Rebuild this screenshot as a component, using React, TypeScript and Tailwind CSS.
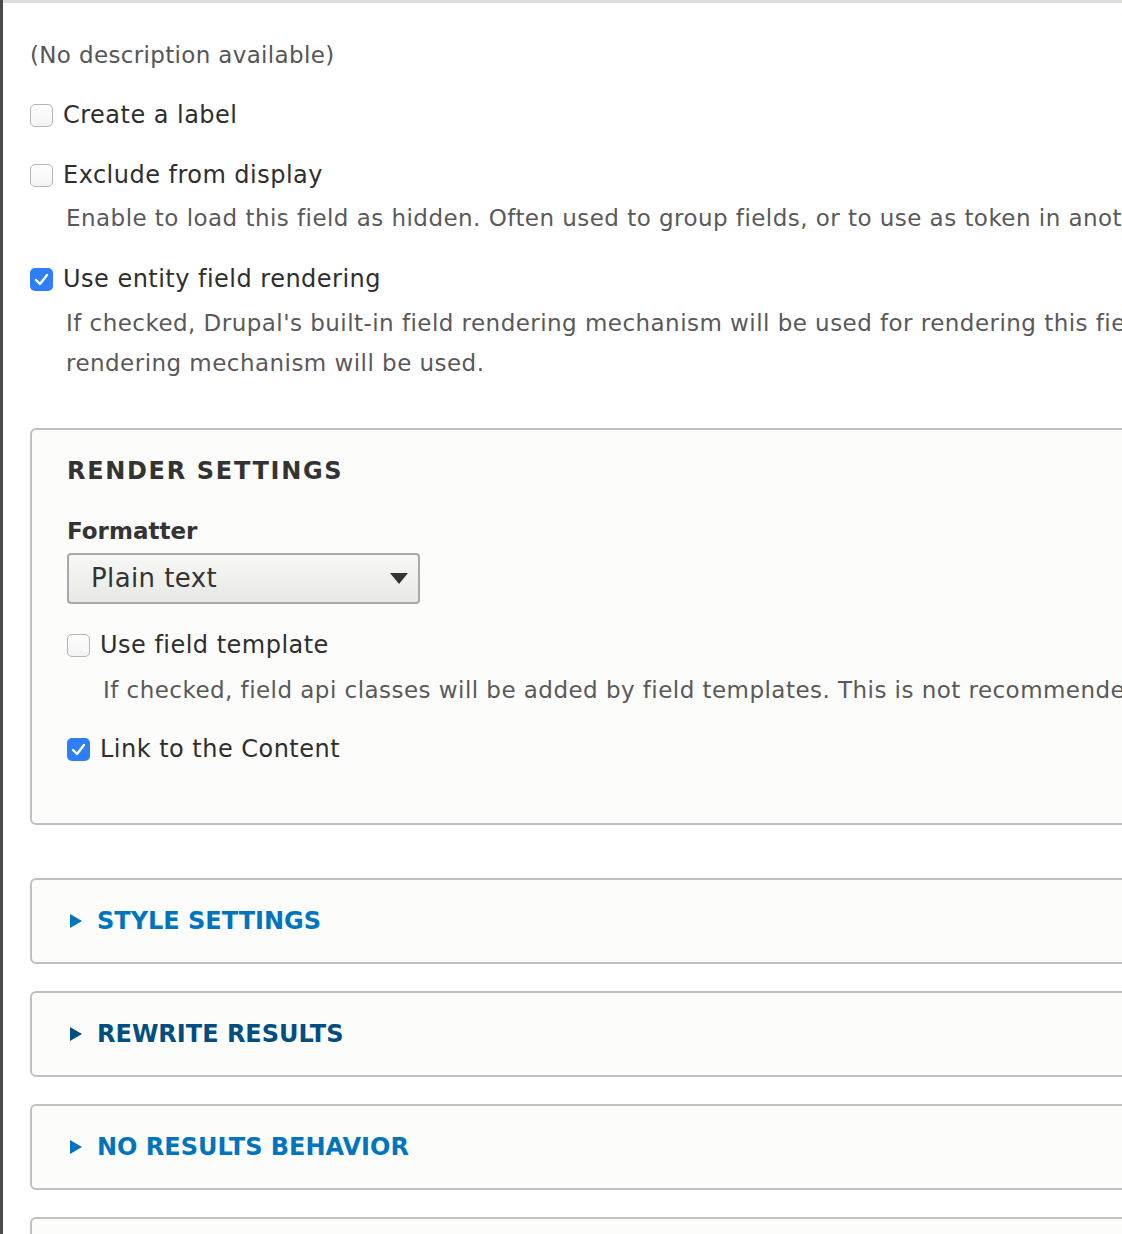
import React from "react";

const font = { fontFamily: '"DejaVu Sans", "Liberation Sans", sans-serif' };

function Checkbox({ checked }: { checked?: boolean }) {
  if (checked) {
    return (
      <span className="flex h-[23px] w-[23px] shrink-0 items-center justify-center rounded-[5px] bg-[#2f7ef6]">
        <svg width="15" height="13" viewBox="0 0 15 13" fill="none">
          <path d="M2 7 L6 11 L13 2" stroke="white" strokeWidth="2.4" strokeLinecap="round" strokeLinejoin="round" />
        </svg>
      </span>
    );
  }
  return (
    <span className="h-[23px] w-[23px] shrink-0 rounded-[5px] border border-[#b5b5b5] bg-gradient-to-b from-white to-[#f3f3f3]" />
  );
}

function CheckRow({ label, checked, className = "" }: { label: string; checked?: boolean; className?: string }) {
  return (
    <div className={`flex h-[40px] items-center gap-[10px] text-[24px] tracking-[0.02em] text-[#2e2e2e] ${className}`}>
      <Checkbox checked={checked} />
      <span>{label}</span>
    </div>
  );
}

function Details({ title, color, className = "" }: { title: string; color: string; className?: string }) {
  return (
    <div
      className={`flex h-[86px] w-[1150px] items-center gap-[15px] rounded-[6px] border-2 border-[#c0c0c0] bg-[#fcfcfa] pl-[38px] ${className}`}
    >
      <svg width="12" height="14" viewBox="0 0 12 14" className={color === "dark" ? "text-[#004f80]" : "text-[#0074bd]"}>
        <path d="M0 0 L12 7 L0 14 Z" fill="currentColor" />
      </svg>
      <span className={`text-[24px] font-bold ${color === "dark" ? "text-[#004f80]" : "text-[#0074bd]"}`}>{title}</span>
    </div>
  );
}

export default function App() {
  return (
    <div className="flex h-[1234px] w-full overflow-hidden bg-white text-[23px]" style={font}>
      <div className="w-[3px] shrink-0 bg-[#4a4a4a]" />
      <div className="flex-1 overflow-hidden border-t-[3px] border-[#dcdcd8]">
        <div className="pl-[27px] pt-[32px]">
          <p className="h-[40px] leading-[40px] tracking-[0.015em] text-[#555]">(No description available)</p>

          <CheckRow label="Create a label" className="mt-[20px]" />
          <CheckRow label="Exclude from display" className="mt-[20px]" />
          <p className="mt-[3px] pl-[36px] leading-[40px] tracking-[0.02em] whitespace-nowrap text-[#595959]">
            Enable to load this field as hidden. Often used to group fields, or to use as token in another field.
          </p>

          <CheckRow label="Use entity field rendering" checked className="mt-[21px]" />
          <p className="mt-[4px] pl-[36px] leading-[40px] tracking-[0.02em] text-[#595959]">
            <span className="block whitespace-nowrap">
              If checked, Drupal's built-in field rendering mechanism will be used for rendering this field. Otherwise the Views
            </span>
            <span className="block">rendering mechanism will be used.</span>
          </p>

          <fieldset className="mt-[45px] w-[1150px] rounded-[6px] border-2 border-[#c0c0c0] bg-[#fcfcfa] pb-[54px] pl-[35px] pt-[21px]">
            <h2 className="h-[40px] text-[24px] font-bold uppercase leading-[40px] tracking-[0.07em] text-[#333]">
              Render settings
            </h2>
            <label className="mt-[20px] block h-[40px] font-bold leading-[40px] text-[#333]">Formatter</label>
            <div className="mt-[2px] flex h-[51px] w-[353px] items-center justify-between rounded-[4px] border-2 border-[#a8a8a8] bg-gradient-to-b from-[#f7f7f5] to-[#e8e8e4] pl-[22px] pr-[10px] text-[26px] tracking-[0.015em] text-[#333]">
              <span>Plain text</span>
              <svg width="18" height="11" viewBox="0 0 18 11">
                <path d="M0 0 L18 0 L9 11 Z" fill="#333" />
              </svg>
            </div>

            <CheckRow label="Use field template" className="mt-[21px]" />
            <p className="mt-[5px] pl-[36px] leading-[40px] tracking-[0.02em] whitespace-nowrap text-[#595959]">
              If checked, field api classes will be added by field templates. This is not recommended unless your CSS depends upon these classes.
            </p>
            <CheckRow label="Link to the Content" checked className="mt-[19px]" />
          </fieldset>

          <Details title="STYLE SETTINGS" color="light" className="mt-[53px]" />
          <Details title="REWRITE RESULTS" color="dark" className="mt-[27px]" />
          <Details title="NO RESULTS BEHAVIOR" color="light" className="mt-[27px]" />
          <Details title="" color="light" className="mt-[27px]" />
        </div>
      </div>
    </div>
  );
}
